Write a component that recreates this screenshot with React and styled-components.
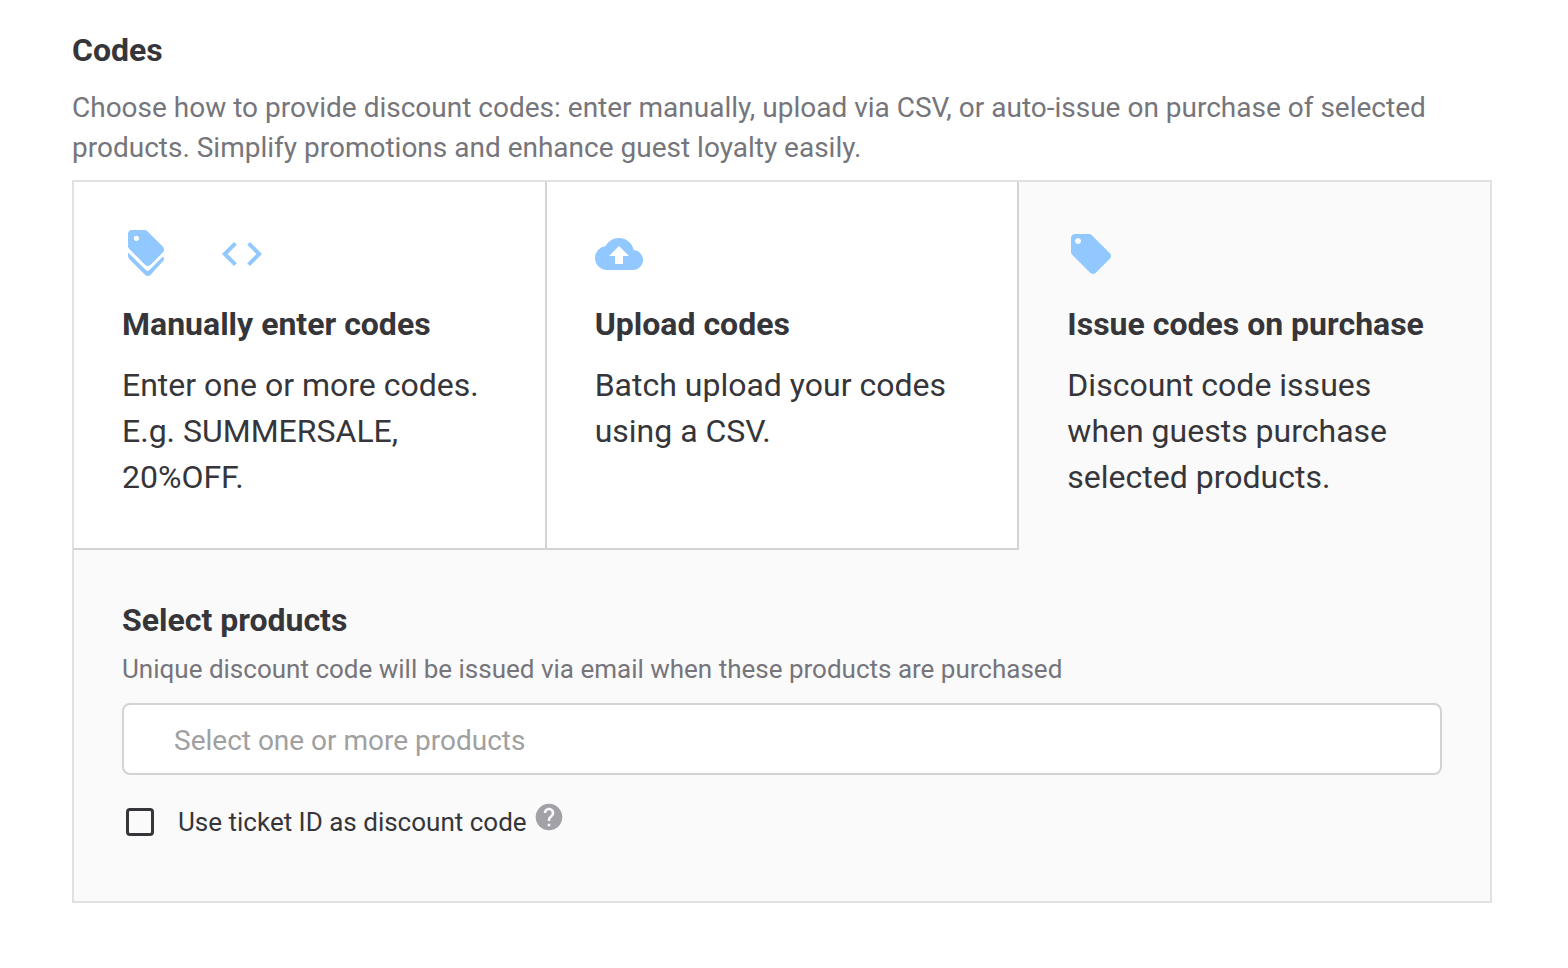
import React, { useState } from 'react';
import styled, { createGlobalStyle } from 'styled-components';
import { MdCode, MdCloudUpload, MdLocalOffer, MdHelp } from 'react-icons/md';

const GlobalStyle = createGlobalStyle`
  *, *::before, *::after { box-sizing: border-box; }
  body {
    margin: 0;
    background: #fff;
    color: #36363a;
    font-family: Roboto, "Liberation Sans", sans-serif;
  }
  h2, h3, p { margin: 0; }
`;

const Page = styled.main`
  padding: 28px 76px 64px 72px;
`;

const Heading = styled.h2`
  font-size: 32px;
  line-height: 44px;
  font-weight: 700;
`;

const Intro = styled.p`
  margin: 16px 0 12px;
  font-size: 28px;
  line-height: 40px;
  color: #75757b;
`;

const Panel = styled.section`
  border: 2px solid #e1e1e1;
  background: #fafafa;
`;

const Options = styled.div`
  display: flex;
`;

const Option = styled.button`
  display: flex;
  flex: 1 1 0;
  flex-direction: column;
  align-items: flex-start;
  min-width: 0;
  margin: 0;
  padding: 48px;
  border: 0 solid ${(p) => (p.$active ? 'transparent' : '#d3d3d3')};
  border-right-width: ${(p) => (p.$active ? '0' : '2px')};
  border-bottom-width: 2px;
  background: ${(p) => (p.$active ? 'transparent' : '#fff')};
  color: inherit;
  font: inherit;
  text-align: left;
  cursor: pointer;
`;

const Icons = styled.span`
  display: flex;
  gap: 48px;
  margin-bottom: 24px;
  color: #90c8ff;

  svg { width: 48px; height: 48px; }
`;

const OptionTitle = styled.span`
  margin-bottom: 16px;
  font-size: 32px;
  line-height: 44px;
  font-weight: 700;
  white-space: nowrap;
`;

const OptionText = styled.span`
  font-size: 32px;
  line-height: 46px;
`;

const Details = styled.div`
  padding: 48px 48px 58px;
`;

const Hint = styled.p`
  margin: 8px 0 15px;
  font-size: 26px;
  line-height: 38px;
  color: #75757b;
`;

const Field = styled.input`
  display: block;
  width: 100%;
  height: 72px;
  padding: 2px 50px 0;
  border: 2px solid #d3d3d3;
  border-radius: 8px;
  background: #fff;
  color: inherit;
  font: inherit;
  font-size: 28px;

  &::placeholder { color: #a0a0a0; opacity: 1; }
`;

const CheckRow = styled.div`
  display: flex;
  align-items: center;
  margin-top: 26px;
  padding-left: 4px;
`;

const Checkbox = styled.input`
  appearance: none;
  width: 28px;
  height: 28px;
  margin: 0 24px 0 0;
  border: 3px solid #36363a;
  border-radius: 4px;

  &:checked { background: #36363a; }
`;

const CheckLabel = styled.label`
  font-size: 26px;
  line-height: 42px;
`;

const HelpButton = styled.button`
  display: flex;
  align-self: flex-start;
  margin: 0 0 0 6px;
  padding: 0;
  border: 0;
  background: none;
  color: #a1a1a7;

  svg { width: 32px; height: 32px; }
`;

function StackedTags() {
  return (
    <svg viewBox="0 0 24 24" fill="currentColor" aria-hidden="true">
      <path
        fillRule="evenodd"
        d="M20.47 8.42l-7.9-7.9C12.25.2 11.6 0 11.1 0H4.8C3.81 0 3 .81 3 1.8v6.3c0 .5.2.95.53 1.28l8.1 8.1c.32.32.77.52 1.27.52s.95-.2 1.27-.53l6.3-6.3c.33-.32.53-.77.53-1.27s-.21-1.15-.53-1.48zM7.2 5.45a1.3 1.3 0 1 1 0-2.6 1.3 1.3 0 0 1 0 2.6z"
      />
      <path d="M3 11.2l8.8 8.7c.6.6 1.4.6 2 0l6.7-6.7c.35.35.5.75.5 1.2s-.15.9-.5 1.25l-6.3 6.8c-.35.36-.8.55-1.3.55s-.95-.2-1.3-.55l-8-8c-.4-.4-.6-.85-.6-1.4z" />
    </svg>
  );
}

const OPTIONS = [
  {
    id: 'manual',
    title: 'Manually enter codes',
    text: 'Enter one or more codes. E.g. SUMMERSALE, 20%OFF.',
    icons: [StackedTags, MdCode],
  },
  {
    id: 'upload',
    title: 'Upload codes',
    text: 'Batch upload your codes using a CSV.',
    icons: [MdCloudUpload],
  },
  {
    id: 'issue',
    title: 'Issue codes on purchase',
    text: 'Discount code issues when guests purchase selected products.',
    icons: [MdLocalOffer],
  },
];

export default function App() {
  const [active, setActive] = useState('issue');

  return (
    <Page>
      <GlobalStyle />
      <Heading>Codes</Heading>
      <Intro>
        Choose how to provide discount codes: enter manually, upload via CSV, or
        auto-issue on purchase of selected products. Simplify promotions and
        enhance guest loyalty easily.
      </Intro>
      <Panel>
        <Options>
          {OPTIONS.map(({ id, title, text, icons }) => (
            <Option
              key={id}
              type="button"
              aria-pressed={active === id}
              $active={active === id}
              onClick={() => setActive(id)}
            >
              <Icons>
                {icons.map((Icon, i) => (
                  <Icon key={i} />
                ))}
              </Icons>
              <OptionTitle>{title}</OptionTitle>
              <OptionText>{text}</OptionText>
            </Option>
          ))}
        </Options>
        <Details>
          <Heading as="h3" id="products-title">Select products</Heading>
          <Hint id="products-hint">
            Unique discount code will be issued via email when these products are
            purchased
          </Hint>
          <Field
            type="text"
            aria-labelledby="products-title"
            aria-describedby="products-hint"
            placeholder="Select one or more products"
          />
          <CheckRow>
            <Checkbox type="checkbox" id="ticket-id" />
            <CheckLabel htmlFor="ticket-id">Use ticket ID as discount code</CheckLabel>
            <HelpButton type="button" aria-label="Help">
              <MdHelp />
            </HelpButton>
          </CheckRow>
        </Details>
      </Panel>
    </Page>
  );
}
